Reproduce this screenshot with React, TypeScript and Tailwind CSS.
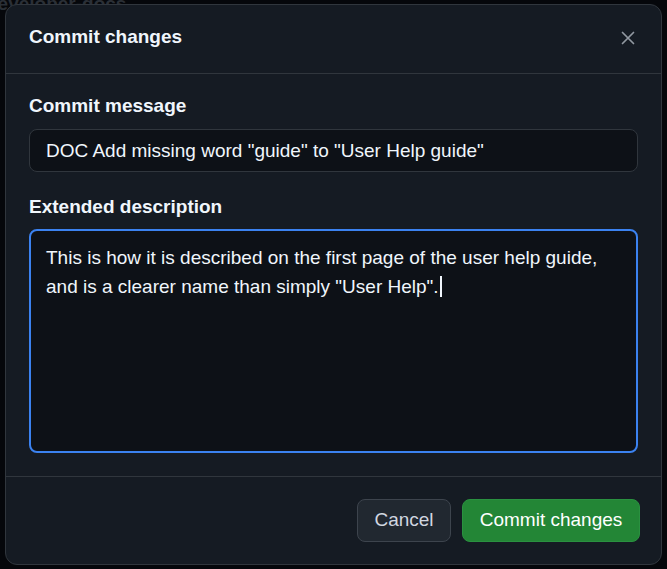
import { useState } from 'react';

const font = { fontFamily: '"Liberation Sans", Arial, sans-serif' };

function CloseIcon() {
  return (
    <svg width="14" height="14" viewBox="0 0 14 14" fill="none" className="text-[#9198a1]">
      <path d="M1.5 1.5l11 11M12.5 1.5l-11 11" stroke="currentColor" strokeWidth="1.7" strokeLinecap="round" />
    </svg>
  );
}

export default function App() {
  const [message, setMessage] = useState('DOC Add missing word "guide" to "User Help guide"');

  return (
    <div className="relative h-[569px] w-[667px] overflow-hidden bg-[#05070b] pl-[5px] pt-[4px]" style={font}>
      {/* dimmed page behind the dialog */}
      <div className="absolute left-[-14px] top-[-10px] text-[19px] font-bold text-[#2a2f36]">developer-docs</div>

      <div className="relative flex h-[561px] w-[657px] flex-col rounded-[12px] border border-[#30363d] bg-[#151b23]">
        <div className="flex h-[69px] items-start justify-between border-b border-[#30363d] pl-[23px] pr-[26px] pt-[20px]">
          <h2 className="text-[19px] font-bold leading-[24px] text-[#f0f6fc]">Commit changes</h2>
          <button className="mt-[6px] flex h-[14px] w-[14px] items-center justify-center">
            <CloseIcon />
          </button>
        </div>

        <div className="flex flex-col px-[23px] pb-[23px] pt-[20px]">
          <label className="text-[19px] font-bold leading-[24px] text-[#f0f6fc]">Commit message</label>
          <input
            value={message}
            onChange={(e) => setMessage(e.target.value)}
            className="mt-[11px] h-[43px] w-full rounded-[8px] border border-[#30363d] bg-[#0d1117] px-[16px] text-[19px] text-[#f0f6fc] outline-none"
            style={font}
          />

          <label className="mt-[23px] text-[19px] font-bold leading-[24px] text-[#f0f6fc]">Extended description</label>
          <div className="mt-[10px] h-[224px] w-full rounded-[8px] border-2 border-[#3b82f0] bg-[#0d1117] px-[15px] pt-[12px] text-[19px] leading-[29px] text-[#f0f6fc]">
            <div>This is how it is described on the first page of the user help guide,</div>
            <div className="flex items-center">
              and is a clearer name than simply "User Help".
              <span className="ml-[1px] inline-block h-[21px] w-[2px] bg-[#f0f6fc]" />
            </div>
          </div>
        </div>

        <div className="flex flex-1 items-start justify-end gap-[11px] border-t border-[#30363d] pr-[21px] pt-[22px]">
          <button className="h-[43px] w-[94px] rounded-[8px] border border-[#3d444d] bg-[#212830] text-[19px] text-[#d1d7e0]">
            Cancel
          </button>
          <button className="h-[43px] w-[178px] rounded-[8px] border border-[#2a9140] bg-[#238636] text-[19px] text-[#ffffff]">
            Commit changes
          </button>
        </div>
      </div>
    </div>
  );
}
